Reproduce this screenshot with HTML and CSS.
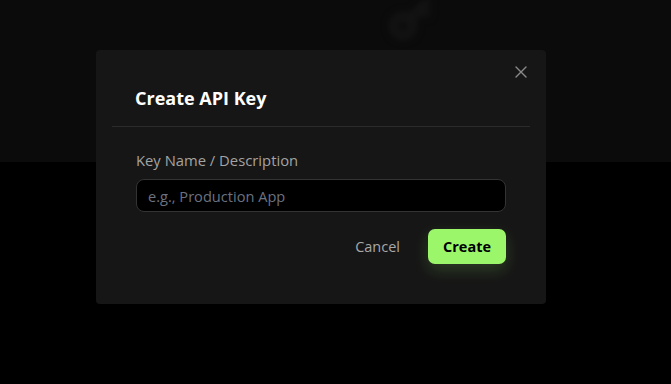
FILE: index.html
```html
<html>
    <head>
        <meta name="viewport" content="width=device-width, initial-scale=1">
        <link rel="stylesheet" href="styles.css">
    </head>
    <body>
        <div class='page'>
            <div class='hero'>
                <svg class='hero-icon' width='48' height='48' viewBox='0 0 24 24' fill='none' stroke='#1c1c1c' stroke-width='3' stroke-linecap='round'>
                    <circle cx='8' cy='15' r='5'/>
                    <path d='M12 11l8-8M17 6l3 3'/>
                </svg>
            </div>
        </div>
        <div class='overlay'>
            <div class='modal'>
                <button class='close' aria-label='Close'>
                    <svg width='12' height='12' viewBox='0 0 12 12' stroke='#8a8a8a' stroke-width='1.4' stroke-linecap='round'>
                        <path d='M1 1l10 10M11 1L1 11'/>
                    </svg>
                </button>
                <div class='modal-header'>
                    <h2 class='title'>Create API Key</h2>
                </div>
                <div class='modal-body'>
                    <label class='label' for='key-name'>Key Name / Description</label>
                    <input class='input' id='key-name' type='text' placeholder='e.g., Production App'>
                    <div class='actions'>
                        <button class='btn cancel'>Cancel</button>
                        <button class='btn create'>Create</button>
                    </div>
                </div>
            </div>
        </div>
    </body>
</html>
```
FILE: styles.css
```css
body {
    margin: 0;
    background: #000;
    font-family: "Open Sans", "Noto Sans", sans-serif;
    overflow: hidden;
    width: 671px;
    height: 384px;
}
.page {
    height: 100%;
}
.hero {
    height: 162px;
    background: #0d0d0d;
    display: flex;
    justify-content: center;
}
.hero-icon {
    margin-top: -4px;
    margin-left: 150px;
    filter: blur(4px);
}
.overlay {
    position: fixed;
    inset: 0;
    display: flex;
    align-items: flex-start;
    padding: 50px 0 0 96px;
    background: rgba(0, 0, 0, 0.15);
}
.modal {
    position: relative;
    width: 450px;
    box-sizing: border-box;
    padding: 16px;
    background: #161616;
    border-radius: 4px;
}
.close {
    position: absolute;
    top: 16px;
    right: 19px;
    background: none;
    border: none;
    padding: 0;
    width: 12px;
    height: 12px;
    display: flex;
}
.modal-header {
    padding: 20px 23px 16px;
    border-bottom: 1px solid #2b2b2b;
}
.title {
    margin: 0;
    font-size: 18px;
    line-height: 24px;
    font-weight: 700;
    color: #fff;
}
.modal-body {
    padding: 23px 24px 24px;
    display: flex;
    flex-direction: column;
}
.label {
    font-size: 14.8px;
    line-height: 20px;
    color: #a3a3a3;
    margin-bottom: 9px;
}
.input {
    height: 33px;
    box-sizing: border-box;
    background: #000;
    border: 1px solid #333;
    border-radius: 8px;
    padding: 0 11px;
    font-family: inherit;
    font-size: 14.6px;
    color: #fff;
    outline: none;
}
.input::placeholder {
    color: #6b7280;
}
.actions {
    margin-top: 17px;
    display: flex;
    justify-content: flex-end;
    gap: 12px;
}
.btn {
    font-family: inherit;
    font-size: 14.5px;
    border: none;
    cursor: pointer;
    height: 35px;
    border-radius: 7px;
}
.cancel {
    background: none;
    color: #a8a8a8;
    padding: 0 16px;
}
.create {
    background: #9cf66a;
    color: #000;
    font-weight: 700;
    padding: 0 15px;
    box-shadow: 0 6px 16px rgba(156, 246, 106, 0.18);
}
```
